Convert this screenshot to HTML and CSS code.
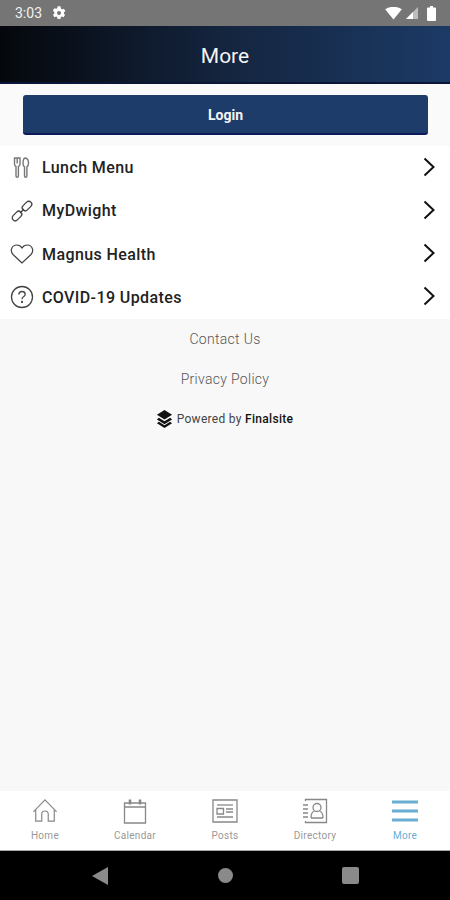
FILE: index.html
```html
<!DOCTYPE html>
<html lang="en">
<head>
    <meta charset="UTF-8">
    <meta name="viewport" content="width=device-width, initial-scale=1.0">
    <title>More</title>
    <link rel="stylesheet" href="styles.css">
</head>
<body>
    <div class="app">
        <div class="status-bar">
            <span class="time">3:03</span>
            <svg class="gear" width="16" height="16" viewBox="0 0 24 24"><path fill="#fff" d="M19.4 13a7.6 7.6 0 0 0 0-2l2.2-1.700-2.200-3.700-2.600 1a7.600 7.600 0 0 0-1.700-1L14.200 2H9.800l-.4 2.700a7.600 7.600 0 0 0-1.700 1l-2.600-1-2.200 3.700L5 11a7.600 7.600 0 0 0 0 2l-2.100 1.700 2.200 3.700 2.600-1a7.600 7.600 0 0 0 1.700 1l.4 2.600h4.400l.4-2.700a7.600 7.600 0 0 0 1.700-1l2.600 1 2.200-3.700zM12 15a3 3 0 1 1 0-6 3 3 0 0 1 0 6z"/></svg>
            <span class="status-right">
                <svg width="17" height="13" viewBox="0 0 18 14"><path fill="#fff" d="M0 2.500Q9-3 18 2.500L9 13.500z"/></svg>
                <svg width="14" height="14" viewBox="0 0 14 14"><path fill="#bdbdbd" d="M13 1v12H1z"/><path fill="#fff" d="M8 6v7H1z"/></svg>
                <svg class="battery" width="9" height="15" viewBox="0 0 9 15"><path fill="#fff" d="M3 0h3v1.500h2a1 1 0 0 1 1 1V14a1 1 0 0 1-1 1H1a1 1 0 0 1-1-1V2.500a1 1 0 0 1 1-1h2z"/></svg>
            </span>
        </div>

        <header class="title-bar">More</header>

        <div class="login-wrap">
            <button class="login-btn">Login</button>
        </div>

        <ul class="menu">
            <li class="menu-item">
                <svg class="menu-icon" width="24" height="24" viewBox="0 0 24 24" fill="none" stroke="#777" stroke-width="1.400"><path d="M4.500 2v6q0 2 1.500 2.500V20a1.200 1.200 0 0 0 2.400 0v-9.500Q10 10 10 8V2z"/><path d="M7.200 2v5.500"/><path d="M15.200 2Q13 2.500 13 7q0 3 1.500 3.800V20a1.200 1.200 0 0 0 2.400 0v-9.200Q18.500 10 18.500 7q0-4.500-3.300-5z"/></svg>
                <span class="menu-label">Lunch Menu</span>
                <svg class="chevron" width="14" height="20" viewBox="0 0 14 20" fill="none" stroke="#111" stroke-width="2"><path d="M2.500 1.500 11.500 10l-9 8.500"/></svg>
            </li>
            <li class="menu-item">
                <svg class="menu-icon" width="24" height="24" viewBox="0 0 24 24" fill="none" stroke="#444" stroke-width="1.300"><rect x="14" y="1.500" width="6" height="11" rx="3" transform="rotate(45 17 7)"/><rect x="4" y="11.500" width="6" height="11" rx="3" transform="rotate(45 7 17)"/><path d="M10 14l4-4"/></svg>
                <span class="menu-label">MyDwight</span>
                <svg class="chevron" width="14" height="20" viewBox="0 0 14 20" fill="none" stroke="#111" stroke-width="2"><path d="M2.500 1.500 11.500 10l-9 8.500"/></svg>
            </li>
            <li class="menu-item">
                <svg class="menu-icon" width="24" height="24" viewBox="0 0 24 24" fill="none" stroke="#444" stroke-width="1.200"><path d="M12 21 3 12.500C-.5 8.500 2 3 6.700 3 9 3 11 4.300 12 6c1-1.700 3-3 5.300-3C22 3 24.500 8.500 21 12.500z"/></svg>
                <span class="menu-label">Magnus Health</span>
                <svg class="chevron" width="14" height="20" viewBox="0 0 14 20" fill="none" stroke="#111" stroke-width="2"><path d="M2.500 1.500 11.500 10l-9 8.500"/></svg>
            </li>
            <li class="menu-item">
                <svg class="menu-icon" width="24" height="24" viewBox="0 0 24 24" fill="none" stroke="#444" stroke-width="1.300"><circle cx="12" cy="12" r="10.500"/><path d="M8.800 9.500Q9 6.500 12 6.500t3.200 2.700q0 1.600-1.700 2.500-1.500.8-1.500 2.500"/><circle cx="12" cy="17" r=".5"/></svg>
                <span class="menu-label">COVID-19 Updates</span>
                <svg class="chevron" width="14" height="20" viewBox="0 0 14 20" fill="none" stroke="#111" stroke-width="2"><path d="M2.500 1.500 11.500 10l-9 8.500"/></svg>
            </li>
        </ul>

        <div class="footer-links">
            <a class="footer-link">Contact Us</a>
            <a class="footer-link">Privacy Policy</a>
            <div class="powered">
                <svg width="17" height="18" viewBox="0 0 18 19"><path fill="#111" d="M9 0 17 5 9 10 1 5z"/><path fill="#111" d="M3 8.300 9 12l6-3.700 2 1.700-8 5-8-5z"/><path fill="#111" d="M3 12.300 9 16l6-3.700 2 1.700-8 5-8-5z"/></svg>
                <span>Powered by <b class="brand">Finalsite</b></span>
            </div>
        </div>

        <nav class="tab-bar">
            <div class="tab">
                <svg width="26" height="26" viewBox="0 0 28 26" fill="none" stroke="#888" stroke-width="1.300"><path d="M1.500 14 14 1l12.500 13"/><path d="M4 12v12h6.500v-7.500q0-3.500 3.500-3.500t3.500 3.500V24H24V12"/></svg>
                <span>Home</span>
            </div>
            <div class="tab">
                <svg width="26" height="26" viewBox="0 0 26 26" fill="none" stroke="#888" stroke-width="1.300"><path d="M2.500 5h21v20h-21zM2.500 9h21"/><path d="M8 1.500v5M18 1.500v5" stroke-width="2.600"/></svg>
                <span>Calendar</span>
            </div>
            <div class="tab">
                <svg width="26" height="26" viewBox="0 0 26 26" fill="none" stroke="#888" stroke-width="1.300"><path d="M1 2h24v22H1z"/><path d="M5 7h16"/><path d="M5 10.500h6.500V16H5z"/><path d="M14 11h7M14 14h7M5 19h16"/></svg>
                <span>Posts</span>
            </div>
            <div class="tab">
                <svg width="26" height="26" viewBox="0 0 26 26" fill="none" stroke="#888" stroke-width="1.300"><path d="M3.500 3V1.500h21v23h-21V23"/><path d="M1 7h5M1 11h5M1 15h5M1 19h5"/><circle cx="15" cy="9.500" r="4"/><path d="M9 20q0-6 3.500-7M21 20q0-6-3.500-7M9 20h12"/></svg>
                <span>Directory</span>
            </div>
            <div class="tab tab-active">
                <svg width="26" height="26" viewBox="0 0 26 26" fill="none" stroke="#6aaed4" stroke-width="3"><path d="M0 4h26M0 13h26M0 22h26"/></svg>
                <span>More</span>
            </div>
        </nav>

        <div class="nav-bar">
            <svg width="16" height="18" viewBox="0 0 16 18"><path fill="#8a8a8a" d="M16 0v18L0 9z"/></svg>
            <span class="nav-circle"></span>
            <span class="nav-square"></span>
        </div>
    </div>
</body>
</html>
```

FILE: styles.css
```css
* { box-sizing: border-box; }
body { margin: 0; font-family: Roboto, "Liberation Sans", sans-serif; background-color: #f8f8f8; }
.app { width: 450px; height: 900px; display: flex; flex-direction: column; overflow: hidden; }

.status-bar { height: 26px; flex: none; display: flex; align-items: center; padding: 0 14px 0 15px; background-color: #757575; color: #f2f2f2; }
.time { font-size: 14px; margin-right: 9px; }
.status-right { margin-left: auto; display: flex; align-items: center; gap: 3px; }
.battery { margin-left: 5px; }

.title-bar { height: 58px; flex: none; display: flex; align-items: center; justify-content: center; padding-top: 3px; font-size: 21px; color: #f4f4f4; background: linear-gradient(90deg, #05070c 0%, #14253f 50%, #1c3a66 100%); border-bottom: 2px solid #0a1538; }

.login-wrap { height: 62px; flex: none; padding: 11px 22px 0 23px; background-color: #fafafa; }
.login-btn { display: block; width: 100%; height: 40px; padding-top: 3px; font-family: inherit; font-size: 14px; font-weight: 700; color: #f4f4f4; background-color: #1d3c69; border: none; border-bottom: 2px solid #0c1a5c; border-radius: 3px; }

.menu { list-style: none; margin: 0; padding: 0; flex: none; height: 173px; background-color: #fff; }
.menu-item { height: 43.25px; display: flex; align-items: center; padding: 0 14px 0 10px; }
.menu-icon { flex: none; }
.menu-label { margin-left: 8px; font-size: 16px; font-weight: 500; color: #222; letter-spacing: .4px; }
.chevron { margin-left: auto; margin-top: -2px; }

.footer-links { flex: 1; display: flex; flex-direction: column; align-items: center; padding-top: 12px; color: #555; font-size: 14px; font-weight: 300; }
.footer-link { height: 17px; line-height: 17px; margin-bottom: 23px; letter-spacing: .3px; }
.powered { display: flex; align-items: center; gap: 4px; margin-top: -1px; margin-left: -1px; font-size: 12px; font-weight: 400; color: #444; letter-spacing: .3px; }
.brand { font-weight: 500; color: #111; }

.tab-bar { height: 60px; flex: none; display: flex; padding-top: 7px; background-color: #fff; border-bottom: 1px solid #aaa; }
.tab { flex: 1; display: flex; flex-direction: column; align-items: center; font-size: 10px; color: #999; }
.tab svg { height: 26px; }
.tab span { margin-top: 6px; letter-spacing: .3px; }
.tab-active { color: #6aaed4; }

.nav-bar { height: 49px; flex: none; position: relative; display: flex; align-items: center; justify-content: center; background-color: #000; }
.nav-bar svg { position: absolute; left: 92px; top: 16px; }
.nav-circle { width: 15px; height: 15px; border-radius: 50%; background-color: #8a8a8a; }
.nav-square { position: absolute; left: 342px; top: 16px; width: 17px; height: 17px; border-radius: 2px; background-color: #8a8a8a; }
```
